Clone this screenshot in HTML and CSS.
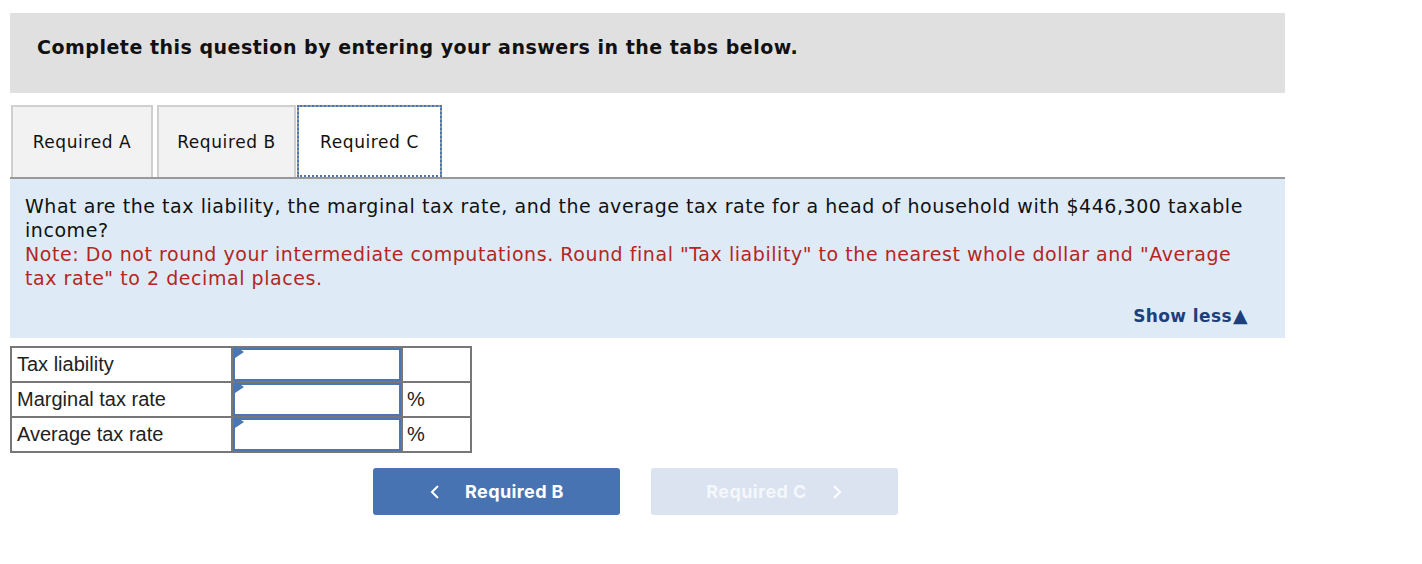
FILE: index.html
```html
<!DOCTYPE html>
<html lang="en">
<head>
  <meta charset="UTF-8">
  <title>Required C</title>
  <link rel="stylesheet" href="styles.css">
</head>
<body>
  <div class="container">
    <div class="header">
      <h1>Complete this question by entering your answers in the tabs below.</h1>
    </div>

    <div class="tabs">
      <div class="tab">Required A</div>
      <div class="tab">Required B</div>
      <div class="tab active">Required C</div>
    </div>

    <div class="panel">
      <p>What are the tax liability, the marginal tax rate, and the average tax rate for a head of household with $446,300 taxable income?</p>
      <p class="note">Note: Do not round your intermediate computations. Round final "Tax liability" to the nearest whole dollar and "Average tax rate" to 2 decimal places.</p>
      <div class="show-less">Show less<span class="arrow">&#9650;</span></div>
    </div>

    <table class="answers">
      <tr>
        <td class="label">Tax liability</td>
        <td class="field"><div class="input"></div></td>
        <td class="unit"></td>
      </tr>
      <tr>
        <td class="label">Marginal tax rate</td>
        <td class="field"><div class="input"></div></td>
        <td class="unit">%</td>
      </tr>
      <tr>
        <td class="label">Average tax rate</td>
        <td class="field"><div class="input"></div></td>
        <td class="unit">%</td>
      </tr>
    </table>

    <div class="nav">
      <button class="nav-btn prev">
        <svg width="12" height="16" viewBox="0 0 12 16"><path d="M9 2 L3 8 L9 14" fill="none" stroke="#fff" stroke-width="2"/></svg>
        <span>Required B</span>
      </button>
      <button class="nav-btn next">
        <span>Required C</span>
        <svg width="12" height="16" viewBox="0 0 12 16"><path d="M3 2 L9 8 L3 14" fill="none" stroke="#fff" stroke-width="2"/></svg>
      </button>
    </div>
  </div>
</body>
</html>
```

FILE: styles.css
```css
* {
  margin: 0;
  padding: 0;
  box-sizing: border-box;
}

body {
  background: #fff;
  font-family: 'DejaVu Sans', Verdana, sans-serif;
  color: #111;
}

.container {
  width: 1275px;
  margin: 13px 0 0 10px;
}

.header {
  background-color: #e0e0e0;
  height: 80px;
  padding: 22px 27px;
}

.header h1 {
  font-size: 19px;
  line-height: 24px;
  font-weight: bold;
  letter-spacing: 0.5px;
}

.tabs {
  display: flex;
  gap: 4px;
  margin-top: 12px;
  padding-left: 1px;
}

.tab {
  height: 72px;
  display: flex;
  align-items: center;
  justify-content: center;
  white-space: nowrap;
  background: #f2f2f2;
  border: 2px solid #cfcfcf;
  border-bottom: none;
  font-size: 17px;
  letter-spacing: 0.6px;
  color: #111;
}

.tab:nth-child(1) {
  width: 142px;
}

.tab:nth-child(2) {
  width: 139px;
  margin-right: -3px;
}

.tab.active {
  width: 145px;
  background: #fff;
  border: 2px solid #999;
  border-bottom: none;
  outline: 2px dotted #4a76b4;
  outline-offset: -2px;
  position: relative;
  z-index: 1;
}

.panel {
  background-color: #deebf7;
  border-top: 2px solid #999;
  padding: 15px 37px 10px 15px;
  font-size: 19px;
  line-height: 24px;
  letter-spacing: 0.55px;
}

.panel .note {
  color: #b5261e;
}

.show-less {
  margin-top: 13px;
  text-align: right;
  font-weight: bold;
  font-size: 17px;
  letter-spacing: 0.4px;
  color: #1f3f7a;
}

.show-less .arrow {
  font-size: 19px;
  margin-left: 1px;
}

.answers {
  margin-top: 8px;
  border-collapse: collapse;
  font-family: 'Liberation Sans', Arial, sans-serif;
  font-size: 20px;
  color: #222;
}

.answers td {
  border: 2px solid #777;
  height: 35px;
  padding: 0;
}

.answers .label {
  width: 221px;
  padding-left: 5px;
}

.answers .field {
  width: 170px;
}

.answers .unit {
  width: 69px;
  padding-left: 4px;
}

.input {
  position: relative;
  height: 33px;
  border: 2px solid #4a76b4;
  background: #fff;
}

.input::before {
  content: '';
  position: absolute;
  left: 0;
  top: 0;
  border-top: 6px solid transparent;
  border-bottom: 6px solid transparent;
  border-left: 9px solid #4a76b4;
  transform: translateY(-4px);
}

.nav {
  display: flex;
  gap: 31px;
  margin-top: 15px;
  padding-left: 363px;
}

.nav-btn {
  width: 247px;
  height: 47px;
  border: none;
  border-radius: 3px;
  display: flex;
  align-items: center;
  justify-content: center;
  gap: 24px;
  font-family: 'Inter', 'Roboto', sans-serif;
  font-size: 18px;
  font-weight: bold;
  letter-spacing: 0.4px;
  color: #fff;
}

.nav-btn.prev {
  background-color: #4873b3;
}

.nav-btn.next {
  background-color: #dae3ef;
  color: #f4f7fb;
}
```
